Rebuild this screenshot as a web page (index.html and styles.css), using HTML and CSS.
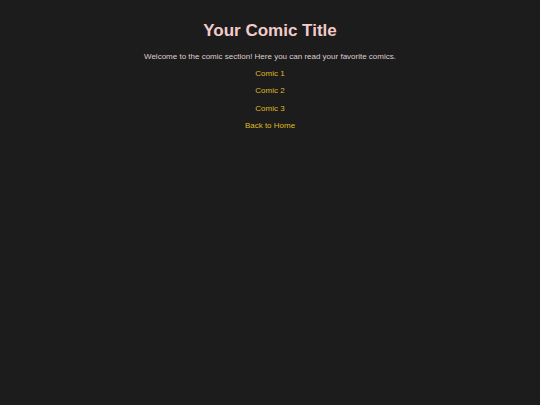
FILE: index.html
```html
<!DOCTYPE html>
<html>
<head>
<meta charset="utf-8">
<link rel="stylesheet" href="styles.css">
</head>
<body>
<main class="page">
  <h1 class="title">Your Comic Title</h1>
  <p class="intro">Welcome to the comic section! Here you can read your favorite comics.</p>
  <nav class="links">
    <a class="link" href="#">Comic 1</a>
    <a class="link" href="#">Comic 2</a>
    <a class="link" href="#">Comic 3</a>
    <a class="link" href="#">Back to Home</a>
  </nav>
</main>
</body>
</html>
```
FILE: styles.css
```css
html, body {
  margin: 0;
  height: 100%;
  background: #1c1c1c;
}
.page {
  font-family: "Liberation Sans", Arial, sans-serif;
  color: #dccece;
  text-align: center;
  padding-top: 21px;
}
.title {
  margin: 0 0 10px;
  font-size: 17px;
  line-height: 20px;
  color: #f2cbcb;
  font-weight: bold;
}
.intro {
  margin: 0 0 5px;
  font-size: 8px;
  line-height: 12px;
}
.links {
  display: flex;
  flex-direction: column;
  align-items: center;
  gap: 5.3px;
}
.link {
  color: #dfba22;
  text-decoration: none;
  font-size: 8px;
  line-height: 12px;
}
```
